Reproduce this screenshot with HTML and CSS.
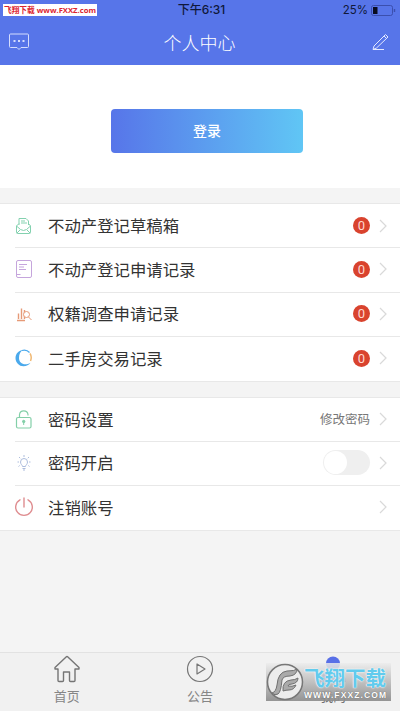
FILE: index.html
```html
<!DOCTYPE html>
<html lang="zh-CN">
<head>
    <meta charset="UTF-8">
    <meta name="viewport" content="width=device-width, initial-scale=1.0">
    <title>个人中心</title>
    <link rel="stylesheet" href="styles.css">
</head>
<body>

    <header class="header">
        <div class="status-bar">
            <span class="site-tag">飞翔下载 www.FXXZ.com</span>
            <span class="status-time">下午6:31</span>
            <span class="status-battery">25%
                <svg width="25" height="11" viewBox="0 0 25 11" fill="none">
                    <rect x="0.5" y="0.5" width="21" height="10" rx="2" stroke="#3b4fae"/>
                    <rect x="2" y="2" width="4.5" height="7" fill="#080c20"/>
                    <path d="M23.5 4v3" stroke="#3b4fae" stroke-width="1.4"/>
                </svg>
            </span>
        </div>
        <div class="title-bar">
            <svg width="20" height="18" viewBox="0 0 20 18" fill="none" stroke="#d5ddfd">
                <path d="M1.500 1h17a1 1 0 0 1 1 1v11.500a1 1 0 0 1-1 1h-6.500l-2 2-2-2H1.500a1 1 0 0 1-1-1V2a1 1 0 0 1 1-1z"/>
                <path d="M4.500 8h2M9 8h2M13.500 8h2" stroke-width="2"/>
            </svg>
            <h1>个人中心</h1>
            <svg width="18" height="18" viewBox="0 0 18 18" fill="none" stroke="#e4e9ff" stroke-linejoin="round">
                <path d="M2 13L13.500 1.500l2.500 2.500L4.500 15 1 16.500zM12 3l2.500 2.500M1 16.500h11"/>
            </svg>
        </div>
    </header>

    <section class="hero">
        <button class="login-button">登录</button>
    </section>

    <!-- 业务记录 -->
    <ul class="menu">
        <li class="menu-item">
            <svg class="menu-icon" viewBox="0 0 18 18" fill="none" stroke="#83d1af">
                <path d="M4 8V1.500h7L13.500 4v4M6 4h4M6 6h6M4 6.500L1.500 9v6.500a1 1 0 0 0 1 1h12a1 1 0 0 0 1-1V9L13.500 6.500M1.500 9l4 3.500q3 2 6 0l4-3.500M2 16l3-3M15 16l-3-3"/>
            </svg>
            <span class="menu-text">不动产登记草稿箱</span>
            <span class="badge">0</span>
            <svg class="arrow" viewBox="0 0 8 14"><path d="M1 1l6 6-6 6"/></svg>
        </li>
        <li class="menu-item">
            <svg class="menu-icon" viewBox="0 0 18 18" fill="none" stroke="#c5a5dc">
                <path d="M3 .5h12a1.500 1.500 0 0 1 1.500 1.500v14a1.500 1.500 0 0 1-1.500 1.500H3A1.500 1.500 0 0 1 1.500 16V2A1.500 1.500 0 0 1 3 .5zM4 4.500h8M4 7h5M4 9.500h7M1.500 14.500h4"/>
            </svg>
            <span class="menu-text">不动产登记申请记录</span>
            <span class="badge">0</span>
            <svg class="arrow" viewBox="0 0 8 14"><path d="M1 1l6 6-6 6"/></svg>
        </li>
        <li class="menu-item">
            <svg class="menu-icon" viewBox="0 0 18 18" fill="none" stroke="#e69a77">
                <path d="M2 15.500h8M3.500 14V8.500M6.500 14V3.500M9.500 14V5" stroke-width="1.400"/>
                <circle cx="11.500" cy="9.500" r="3" fill="#fff"/>
                <path d="M13.500 12l3 3"/>
            </svg>
            <span class="menu-text">权籍调查申请记录</span>
            <span class="badge">0</span>
            <svg class="arrow" viewBox="0 0 8 14"><path d="M1 1l6 6-6 6"/></svg>
        </li>
        <li class="menu-item">
            <svg class="menu-icon" viewBox="0 0 18 18" fill="none">
                <path d="M8 1C4 1.500 .5 4.500.5 9s3.500 8.300 8 8.300c3 0 5.500-1.300 7-3.500-6 3.500-11.500.5-11.500-4.800C4 5 5.500 2.500 8 1z" fill="#4aa9ec"/>
                <path d="M7 1.500q4.500-1.300 7.500 2" stroke="#4aa9ec" stroke-width="1.200"/>
                <path d="M15 4.500q2.200 3.500.5 7.500" stroke="#f0b873" stroke-width="1.500"/>
            </svg>
            <span class="menu-text">二手房交易记录</span>
            <span class="badge">0</span>
            <svg class="arrow" viewBox="0 0 8 14"><path d="M1 1l6 6-6 6"/></svg>
        </li>
    </ul>

    <!-- 账号设置 -->
    <ul class="menu">
        <li class="menu-item">
            <svg class="menu-icon icon-lock" viewBox="0 0 18 20" fill="none" stroke="#83cfa8">
                <rect x="1.500" y="8.500" width="14.500" height="10.500" rx="1.500" stroke-width="1.200"/>
                <path d="M4.500 8.500V5.500a4.300 4.300 0 0 1 8.500 0v1" stroke-width="1.200"/>
                <circle cx="8.700" cy="12.500" r="1.200" fill="#83cfa8"/>
                <path d="M8.700 13v3"/>
            </svg>
            <span class="menu-text">密码设置</span>
            <span class="menu-value">修改密码</span>
            <svg class="arrow" viewBox="0 0 8 14"><path d="M1 1l6 6-6 6"/></svg>
        </li>
        <li class="menu-item">
            <svg class="menu-icon" viewBox="0 0 18 18" fill="none" stroke="#adbddd">
                <path d="M7.500 12.500c0-1.500-2-2-2-4.500a3.500 3.500 0 0 1 7 0c0 2.500-2 3-2 4.500zM7.500 14.500h3M8 16h2"/>
                <path d="M9 1v2M4 3l1.200 1.200M14 3l-1.200 1.200M2.500 8h1.500M14 8h1.500M3.500 12.500l1.200-1M14.500 12.500l-1.200-1"/>
            </svg>
            <span class="menu-text">密码开启</span>
            <span class="switch"></span>
            <svg class="arrow" viewBox="0 0 8 14"><path d="M1 1l6 6-6 6"/></svg>
        </li>
        <li class="menu-item">
            <svg class="menu-icon icon-power" viewBox="0 0 20 20" fill="none" stroke="#df8d90" stroke-width="1.400" stroke-linecap="round">
                <path d="M6 2.800a8.300 8.300 0 1 0 8 0M10 1v9"/>
            </svg>
            <span class="menu-text">注销账号</span>
            <svg class="arrow" viewBox="0 0 8 14"><path d="M1 1l6 6-6 6"/></svg>
        </li>
    </ul>

    <nav class="tab-bar">
        <div class="tab">
            <svg width="28" height="28" viewBox="0 0 28 28" fill="none" stroke="#757575" stroke-width="1.400" stroke-linejoin="round">
                <path d="M13.100 1.900L2 12.500v1.500h3v11.500q0 1 1 1h3.500q1 0 1-1V17h6v8.500q0 1 1 1H21q1 0 1-1V14h4v-1.500L14.900 1.900q-.9-.8-1.800 0z"/>
            </svg>
            <span>首页</span>
        </div>
        <div class="tab">
            <svg width="28" height="28" viewBox="0 0 28 28" fill="none" stroke="#757575" stroke-width="1.200" stroke-linejoin="round">
                <circle cx="14" cy="14" r="12.500"/>
                <path d="M11 9v10l8-5z"/>
            </svg>
            <span>公告</span>
        </div>
        <div class="tab">
            <svg width="28" height="28" viewBox="0 0 28 28" fill="#586fe7">
                <circle cx="14" cy="8.500" r="7"/>
                <path d="M1 27q1-10 9-11h8q8 1 9 11z"/>
            </svg>
            <span class="tab-active">我的</span>
        </div>
    </nav>

    <!-- 下载站水印 -->
    <div class="watermark">
        <svg class="watermark-logo" width="38" height="38" viewBox="0 0 38 38">
            <circle cx="19" cy="19" r="17.500" fill="#ececec" stroke="#777" stroke-width="1.500"/>
            <path d="M6 30q4-1 5-8 1-13 10-14 8 0 10-2 0 6-7 7-7 0-8 4-1 12-4 14-3 2-6-1z" fill="#aaa" stroke="#707070"/>
            <path d="M17 28q-1-10 8-11 4 0 7-2 0 5-6 6-4 0-4 2 4 1 8-1-2 5-7 5-3 0-6 1z" fill="#aaa" stroke="#707070"/>
        </svg>
        <div class="watermark-text">
            <span class="watermark-name">飞翔下载</span>
            <span class="watermark-url">WWW.FXXZ.COM</span>
        </div>
    </div>

</body>
</html>
```
FILE: styles.css
```css
* {
    box-sizing: border-box;
}
body {
    font-family: "Noto Sans CJK SC", sans-serif;
    margin: 0;
    height: 711px;
    display: flex;
    flex-direction: column;
    background-color: #f4f4f4;
    color: #333;
    overflow: hidden;
}
.header {
    height: 65px;
    background-color: #5775e9;
}
.status-bar {
    height: 20px;
    padding: 0 4px 0 3px;
    display: grid;
    grid-template-columns: 1fr auto 1fr;
    align-items: center;
    font-size: 12px;
    line-height: 20px;
    color: #10183a;
}
.site-tag {
    width: 94px;
    height: 12px;
    background-color: #fff;
    color: #dc2430;
    font-family: "Open Sans", "Noto Sans CJK SC", sans-serif;
    font-size: 7.7px;
    font-weight: bold;
    line-height: 12px;
    text-align: center;
    white-space: nowrap;
}
.status-time {
    font-family: Inter, "Noto Sans CJK SC", sans-serif;
    font-weight: 500;
    padding-left: 4px;
}
.status-battery {
    display: flex;
    justify-content: flex-end;
    align-items: center;
    gap: 3px;
    font-family: Inter, sans-serif;
    font-size: 11.5px;
}
.title-bar {
    height: 45px;
    padding: 0 10px 2px 9px;
    display: flex;
    justify-content: space-between;
    align-items: center;
}
.title-bar h1 {
    margin: 0 2px 0 0;
    color: #fff;
    font-size: 18px;
    font-weight: 300;
    line-height: 24px;
}
.hero {
    height: 123px;
    padding-top: 44px;
    background-color: #fff;
    text-align: center;
}
.login-button {
    display: block;
    width: 192px;
    height: 44px;
    margin: 0 0 0 111px;
    padding: 0 0 2px;
    border: none;
    border-radius: 4px;
    background: linear-gradient(to right, #5775e9, #60c6f5);
    color: #fff;
    font-family: inherit;
    font-size: 14px;
    font-weight: 500;
}
.menu {
    list-style-type: none;
    margin: 16px 0 0;
    padding: 0 13px 0 15px;
    background-color: #fff;
    box-shadow: 0 -1px #e8e8e8, 0 1px #e8e8e8;
}
.menu + .menu {
    margin-top: 17px;
}
.menu-item {
    position: relative;
    display: flex;
    align-items: center;
    height: 44.5px;
}
.menu-item:first-child {
    height: 43px;
}
/* 分割线 */
.menu-item + .menu-item::before {
    content: "";
    position: absolute;
    top: 0;
    left: 0;
    right: -13px;
    height: 1px;
    background-color: #e8e8e8;
}
.menu-icon {
    width: 18px;
    height: 18px;
    margin-right: 15px;
}
.icon-lock {
    height: 20px;
}
.icon-power {
    width: 20px;
    height: 20px;
    margin: 0 14px 0 -1px;
}
.menu-text {
    flex: 1;
    padding-bottom: 1px;
    font-size: 16.4px;
}
.badge {
    width: 17px;
    height: 17px;
    border-radius: 50%;
    background-color: #d9432e;
    color: #ffd9d0;
    font-family: Roboto, sans-serif;
    font-size: 13px;
    line-height: 17px;
    text-align: center;
}
.menu-value {
    padding-bottom: 1px;
    color: #777;
    font-size: 12.5px;
}
.arrow {
    width: 8px;
    height: 14px;
    margin-left: 9px;
    fill: none;
    stroke: #d9d9d9;
    stroke-width: 1.2;
}
.switch {
    width: 47px;
    height: 25px;
    padding: 1px;
    border-radius: 13px;
    background-color: #efefef;
}
.switch::before {
    content: "";
    display: block;
    width: 23px;
    height: 23px;
    border-radius: 50%;
    background-color: #fff;
}
.tab-bar {
    display: flex;
    height: 59px;
    margin-top: auto;
    background-color: #f1f1f1;
    border-top: 1px solid #e2e2e2;
}
.tab {
    flex: 1;
    display: flex;
    flex-direction: column;
    align-items: center;
    padding-top: 2px;
    color: #868686;
    font-size: 13px;
    line-height: 25px;
}
.tab-active {
    color: #707070;
}
.watermark {
    position: absolute;
    left: 266px;
    top: 663px;
    width: 125px;
    height: 38px;
    display: flex;
    background: linear-gradient(rgba(236, 236, 236, 0.85), rgba(140, 140, 140, 0.92));
}
.watermark-text {
    display: flex;
    flex-direction: column;
    white-space: nowrap;
}
.watermark-name {
    height: 27px;
    color: #62cbed;
    font-size: 20.5px;
    font-weight: bold;
    line-height: 29px;
    text-shadow: 0 0 1px #fff, 0 0 2px #fff;
}
.watermark-url {
    color: #fff;
    font-family: "Liberation Sans", sans-serif;
    font-size: 8.5px;
    font-weight: bold;
    letter-spacing: 1.1px;
    line-height: 10px;
    text-shadow: 0 0 1px #555;
}
```
